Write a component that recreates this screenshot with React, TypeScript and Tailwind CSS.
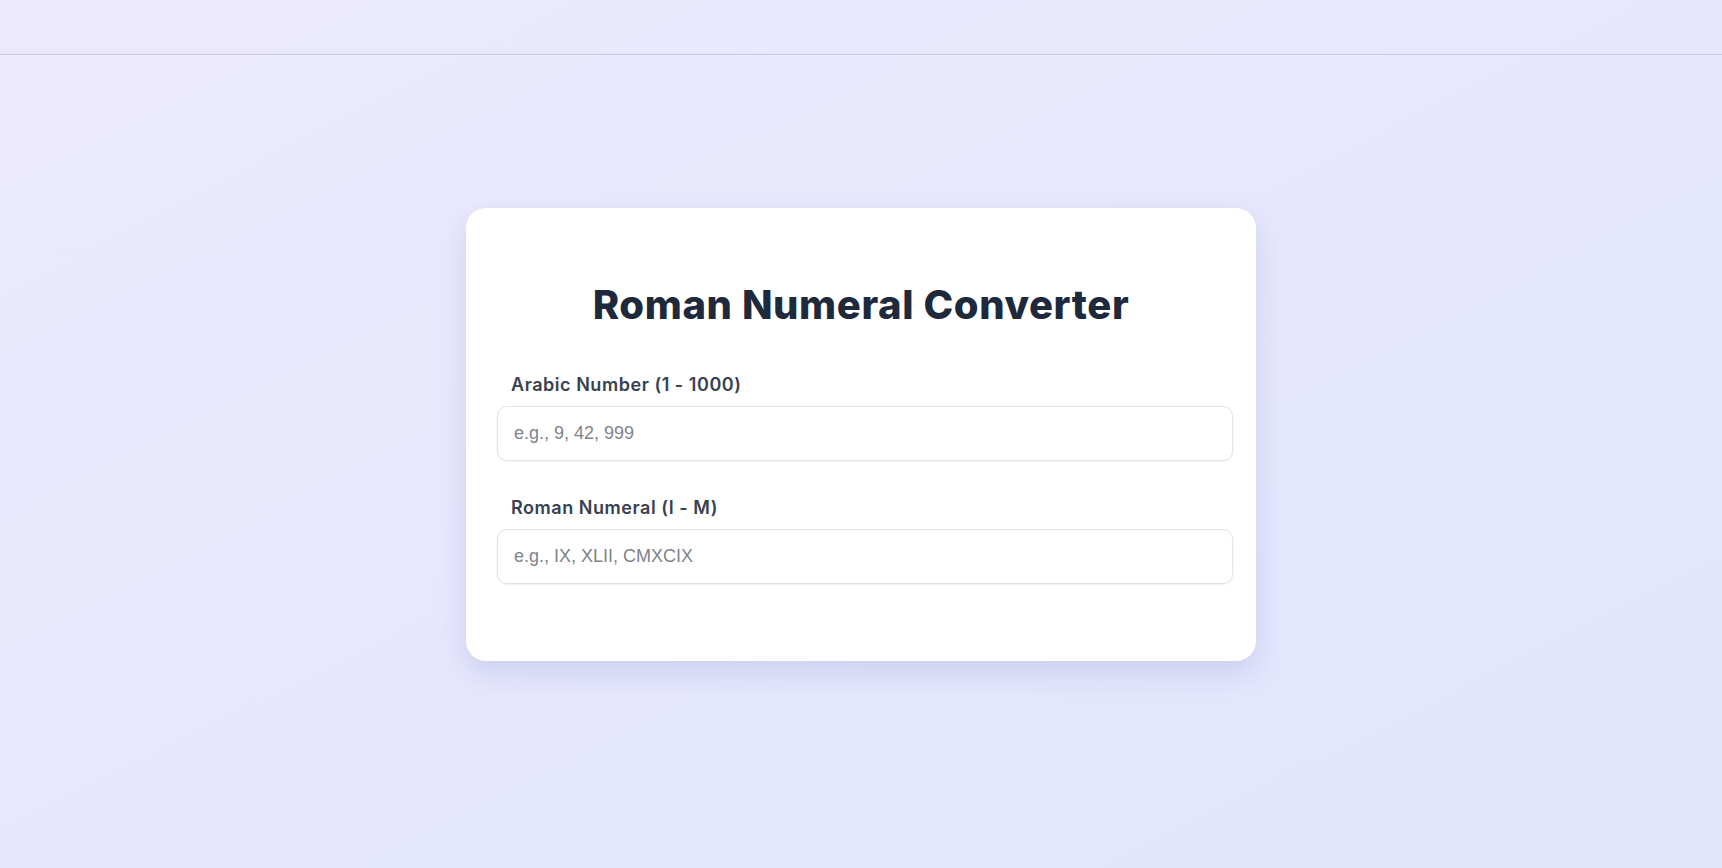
import { useState } from "react";

const Field = ({ label, placeholder, value, onChange }: { label: string, placeholder: string, value: string, onChange: (v: string) => void }) => {
    return (
        <div className="flex flex-col">
            <label className="mb-[9px] pl-[14px] text-[18px] leading-6 tracking-[0.03em] font-semibold text-[#374151]">{label}</label>
            <input
                type="text"
                value={value}
                onChange={(e) => onChange(e.target.value)}
                placeholder={placeholder}
                className="h-[55px] w-full rounded-[10px] border border-[#e2e3e8] bg-white px-4 text-[18px] text-[#1f2937] shadow-[0_1px_2px_rgba(0,0,0,0.06)] outline-none placeholder:text-[#80838a] [font-family:'Liberation_Sans',Arial,sans-serif]"
            />
        </div>
    )
}

const App = () => {
    const [arabic, setArabic] = useState('');
    const [roman, setRoman] = useState('');

    return (
        <div className="min-h-screen flex flex-col bg-gradient-to-br from-[#ece9fe] to-[#e1e6fc] [font-family:Inter,'Noto_Sans',sans-serif]">
            <header className="h-[55px] shrink-0 border-b border-[#c9c8dc]" />

            <main className="flex-1 flex items-center justify-center pb-[54px]">
                <div className="w-[790px] rounded-[20px] bg-white pt-[77px] pb-[77px] shadow-[0_12px_28px_rgba(120,122,190,0.22)]">
                    <h1 className="text-center text-[40px] leading-10 tracking-[0.015em] font-extrabold text-[#1e293b]">Roman Numeral Converter</h1>

                    <div className="mt-[48px] ml-[31px] mr-[23px] flex flex-col gap-[35px]">
                        <Field label="Arabic Number (1 - 1000)" placeholder="e.g., 9, 42, 999" value={arabic} onChange={setArabic} />
                        <Field label="Roman Numeral (I - M)" placeholder="e.g., IX, XLII, CMXCIX" value={roman} onChange={setRoman} />
                    </div>
                </div>
            </main>
        </div>
    )
}
export default App
